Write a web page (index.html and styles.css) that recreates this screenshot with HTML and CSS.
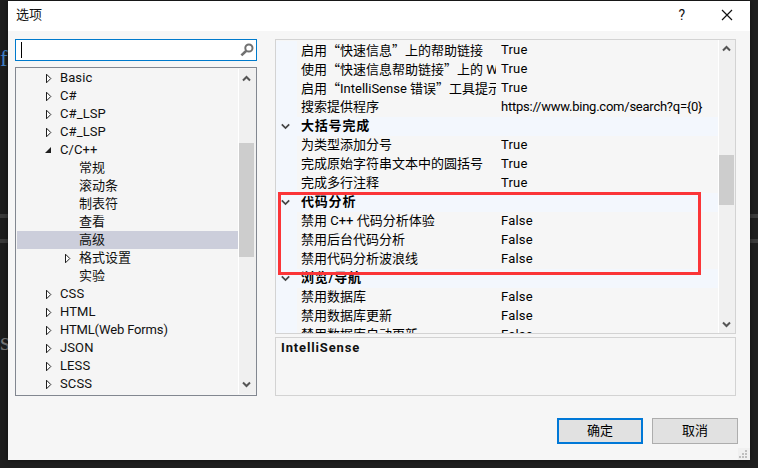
FILE: index.html
```html
<!DOCTYPE html>
<html lang="zh-CN">
<head>
<meta charset="utf-8">
<title>选项</title>
<link rel="stylesheet" href="styles.css">
</head>
<body>
<div class="editor">
  <span class="code code-f">f</span>
  <span class="code code-s">s</span>
</div>
<main class="dialog">
  <header class="titlebar">
    <h1>选项</h1>
    <span class="help">?</span>
    <svg class="close" width="12" height="12" viewBox="0 0 12 12"><path d="M1 1l10 10M11 1L1 11"/></svg>
  </header>
  <div class="content">
    <section class="left">
      <div class="search">
        <span class="caret"></span>
        <svg width="14" height="14" viewBox="0 0 14 14"><circle cx="8.9" cy="5" r="3.6"/><path d="M6.3 7.7L1.4 12.4"/></svg>
      </div>
      <div class="tree">
        <ul>
          <li><svg class="arrow"><path d="M1.5 1.2v8.6l4.3-4.3z"/></svg>Basic</li>
          <li><svg class="arrow"><path d="M1.5 1.2v8.6l4.3-4.3z"/></svg>C#</li>
          <li><svg class="arrow"><path d="M1.5 1.2v8.6l4.3-4.3z"/></svg>C#_LSP</li>
          <li><svg class="arrow"><path d="M1.5 1.2v8.6l4.3-4.3z"/></svg>C#_LSP</li>
          <li><svg class="arrow open"><path d="M6 2v6H0z"/></svg>C/C++</li>
          <li class="child">常规</li>
          <li class="child">滚动条</li>
          <li class="child">制表符</li>
          <li class="child">查看</li>
          <li class="child selected">高级</li>
          <li class="child"><svg class="arrow"><path d="M1.5 1.2v8.6l4.3-4.3z"/></svg>格式设置</li>
          <li class="child">实验</li>
          <li><svg class="arrow"><path d="M1.5 1.2v8.6l4.3-4.3z"/></svg>CSS</li>
          <li><svg class="arrow"><path d="M1.5 1.2v8.6l4.3-4.3z"/></svg>HTML</li>
          <li><svg class="arrow"><path d="M1.5 1.2v8.6l4.3-4.3z"/></svg><span class="forms">HTML(Web Forms)</span></li>
          <li><svg class="arrow"><path d="M1.5 1.2v8.6l4.3-4.3z"/></svg>JSON</li>
          <li><svg class="arrow"><path d="M1.5 1.2v8.6l4.3-4.3z"/></svg>LESS</li>
          <li><svg class="arrow"><path d="M1.5 1.2v8.6l4.3-4.3z"/></svg>SCSS</li>
        </ul>
        <div class="scroll">
          <svg class="up" width="9" height="7" viewBox="0 0 9 7"><path d="M1 5.5L4.5 2 8 5.5"/></svg>
          <span class="thumb"></span>
          <svg class="down" width="9" height="7" viewBox="0 0 9 7"><path d="M1 1.5L4.5 5 8 1.5"/></svg>
        </div>
      </div>
    </section>
    <section class="right">
      <div class="props">
        <div class="rows">
          <div class="row"><i></i><b>启用<q>“</q>快速信息<q>”</q>上的帮助链接</b><span>True</span></div>
          <div class="row"><i></i><b>使用<q>“</q>快速信息帮助链接<q>”</q>上的 W</b><span>True</span></div>
          <div class="row"><i></i><b>启用<q>“</q>IntelliSense 错误<q>”</q>工具提示</b><span>True</span></div>
          <div class="row"><i></i><b>搜索提供程序</b><span class="url">https://www.bing.com/search?q={0}</span></div>
          <div class="row category"><i><svg width="9" height="7" viewBox="0 0 9 7"><path d="M.8 1.3L4.5 5l3.7-3.7"/></svg></i><b>大括号完成</b></div>
          <div class="row"><i></i><b>为类型添加分号</b><span>True</span></div>
          <div class="row"><i></i><b>完成原始字符串文本中的圆括号</b><span>True</span></div>
          <div class="row"><i></i><b>完成多行注释</b><span>True</span></div>
          <div class="row category"><i><svg width="9" height="7" viewBox="0 0 9 7"><path d="M.8 1.3L4.5 5l3.7-3.7"/></svg></i><b>代码分析</b></div>
          <div class="row"><i></i><b>禁用 C++ 代码分析体验</b><span>False</span></div>
          <div class="row"><i></i><b>禁用后台代码分析</b><span>False</span></div>
          <div class="row"><i></i><b>禁用代码分析波浪线</b><span>False</span></div>
          <div class="row category"><i><svg width="9" height="7" viewBox="0 0 9 7"><path d="M.8 1.3L4.5 5l3.7-3.7"/></svg></i><b>浏览/导航</b></div>
          <div class="row"><i></i><b>禁用数据库</b><span>False</span></div>
          <div class="row"><i></i><b>禁用数据库更新</b><span>False</span></div>
          <div class="row"><i></i><b>禁用数据库自动更新</b><span>False</span></div>
        </div>
        <div class="scroll">
          <svg class="up" width="9" height="7" viewBox="0 0 9 7"><path d="M1 5.5L4.5 2 8 5.5"/></svg>
          <span class="thumb"></span>
          <svg class="down" width="9" height="7" viewBox="0 0 9 7"><path d="M1 1.5L4.5 5 8 1.5"/></svg>
        </div>
      </div>
      <div class="description">IntelliSense</div>
    </section>
  </div>
  <footer>
    <button class="primary">确定</button>
    <button>取消</button>
  </footer>
  <svg class="grip" width="12" height="12" viewBox="0 0 12 12"><path d="M7 2h2v2H7zM7 5h2v2H7zM4 5h2v2H4zM7 8h2v2H7zM4 8h2v2H4zM1 8h2v2H1z"/></svg>
  <div class="highlight"></div>
</main>
</body>
</html>
```
FILE: styles.css
```css
* { box-sizing: border-box; }
body {
  margin: 0;
  width: 758px;
  height: 468px;
  overflow: hidden;
  background: #1e1e1e;
  color: #111;
  font: 13px/18px Roboto, "Noto Sans CJK SC", sans-serif;
  padding: 1px 8px 8px;
}
.editor {
  position: absolute;
  inset: 0;
  background: linear-gradient(#1e1e1e 214px, #3b3b3b 214px, #3b3b3b 218px, #1e1e1e 218px, #1e1e1e 239px, #3b3b3b 239px, #3b3b3b 243px, #1e1e1e 243px);
}
.code {
  position: absolute;
  left: 0;
  width: 8px;
  overflow: hidden;
  font: 23px/24px "Liberation Serif", serif;
}
.code-f { top: 47px; color: #4280c4; }
.code-s { top: 329px; font-size: 26px; line-height: 26px; color: #777; }
.dialog {
  position: relative;
  width: 742px;
  height: 459px;
  background: #f6f6f6;
  box-shadow: 0 0 5px #0008;
  display: flex;
  flex-direction: column;
}
.titlebar {
  height: 30px;
  background: #fff;
  display: flex;
  align-items: center;
  padding: 0 17px 2px 8px;
}
h1 { margin: 0 auto 0 0; font-size: 13px; font-weight: 400; }
.help { font-size: 14px; margin-right: 36px; }
.close { fill: none; stroke: #111; stroke-width: 1.2; }
.content {
  display: flex;
  justify-content: space-between;
  padding: 8px 14px 0 7px;
}
.left { width: 242px; }
.search {
  height: 22px;
  border: 1px solid #007acc;
  background: #fff;
  display: flex;
  align-items: center;
  justify-content: space-between;
  padding: 0 2px 0 5px;
}
.search svg { fill: none; stroke: #717171; stroke-width: 2; }
.search path { stroke-width: 2.6; }
.caret { width: 1px; height: 16px; background: #000; }
.tree {
  margin-top: 6px;
  height: 329px;
  border: 1px solid #828790;
  background: #f5f5f5;
  display: flex;
  padding: 1px 0 1px 1px;
}
ul { list-style: none; margin: 0; padding: 0; flex: 1; }
li {
  height: 18px;
  display: flex;
  align-items: center;
  padding-left: 28px;
  letter-spacing: .1px;
}
li > .arrow { margin-right: 7px; }
.child { padding-left: 62px; letter-spacing: 0; }
.child:has(.arrow) { padding-left: 47px; }
.selected { background: #cccedb; }
.arrow {
  width: 8px;
  height: 11px;
  fill: #fff;
  stroke: #1e1e1e;
  flex: none;
}
.arrow.open { fill: #1e1e1e; stroke: none; }
.forms { letter-spacing: -.15px; }
.scroll {
  width: 18px;
  border-left: 1px solid #fff;
  background: #f0f0f0;
  display: flex;
  flex-direction: column;
}
.scroll svg { margin-left: 3px; fill: none; stroke: #555; stroke-width: 2; flex: none; }
.up { margin-top: 6px; }
.down { margin-top: auto; margin-bottom: 6px; }
.thumb { width: 15px; height: 114px; background: #cdcdcd; margin-top: 61px; }
.right { width: 461px; }
.props {
  height: 295px;
  border: 1px solid #d3d3d3;
  display: flex;
}
.props .scroll { width: 17px; }
.props .up { margin-top: 5px; }
.props .down { margin-bottom: 5px; }
.props .thumb { height: 50px; margin-top: 103px; }
.rows { flex: 1; overflow: hidden; padding-top: 1px; color: #000; }
.row {
  height: 19px;
  line-height: 17px;
  display: grid;
  grid-template-columns: 21px 199px 1fr;
}
.row i {
  background: #f3f7fd;
  display: flex;
  align-items: center;
  justify-content: flex-end;
  padding-right: 7px;
}
.row i svg { fill: none; stroke: #444; stroke-width: 1.7; }
.row b { font-weight: 400; padding-left: 4px; overflow: hidden; white-space: nowrap; }
.row > span { padding-left: 5px; white-space: nowrap; letter-spacing: .2px; }
.row > .url { letter-spacing: -.24px; }
.category { background: #f3f7fd; }
.category b { font-weight: 700; letter-spacing: .8px; }
q { quotes: none; font-family: "Noto Sans CJK SC", sans-serif; }
.description {
  margin-top: 3px;
  height: 59px;
  border: 1px solid #d3d3d3;
  padding: 1px 5px;
  font-weight: 700;
  letter-spacing: .85px;
}
footer {
  display: flex;
  justify-content: flex-end;
  gap: 9px;
  padding: 22px 12px 0 0;
}
button {
  width: 86px;
  height: 26px;
  padding: 0;
  border: 1px solid #adadad;
  background: #e1e1e1;
  font: inherit;
  color: #000;
}
.primary { border: 2px solid #0078d7; }
.grip { position: absolute; right: 0; bottom: 0; fill: #bfbfbf; background: #f0f0f0; }
.highlight {
  position: absolute;
  left: 270px;
  top: 191px;
  width: 423px;
  height: 83px;
  border: 3px solid #fb3538;
}
```
